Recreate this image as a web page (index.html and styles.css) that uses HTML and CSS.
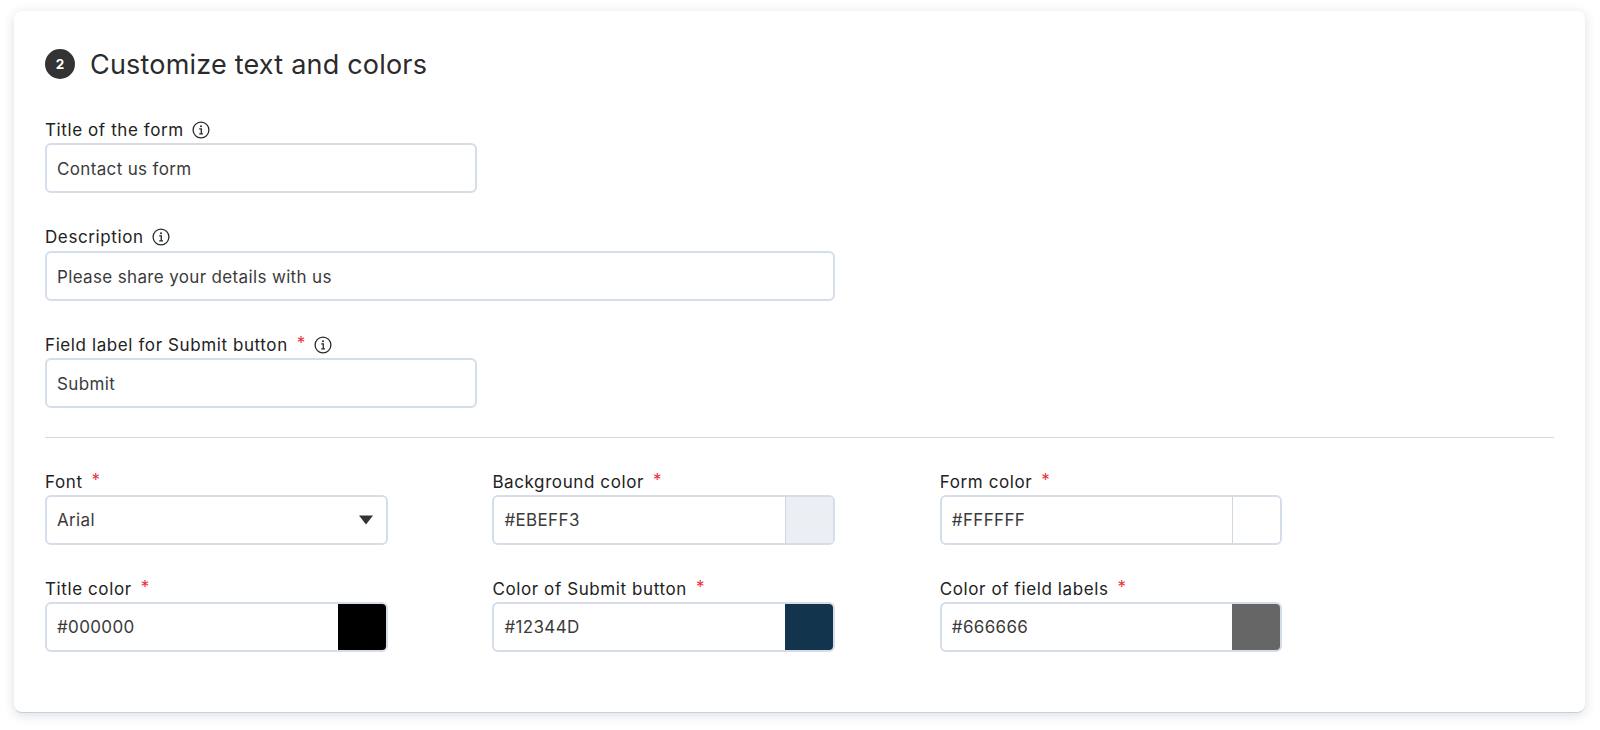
FILE: index.html
```html
<!DOCTYPE html>
<html lang="en">
<head>
    <meta charset="UTF-8">
    <meta name="viewport" content="width=device-width, initial-scale=1.0">
    <title>Customize text and colors</title>
    <link rel="stylesheet" href="styles.css">
</head>
<body>
    <div class="card">
        <div class="card-header">
            <span class="step">2</span>
            <h2>Customize text and colors</h2>
        </div>

        <div class="fields">
            <div class="field field-short">
                <label>Title of the form<svg class="info" viewBox="0 0 18 18"><circle cx="9" cy="9" r="7.9"/><path d="M7.2 7.9H9.3V12.8M7.2 12.9H11"/><circle class="dot" cx="9" cy="5.3" r="1"/></svg></label>
                <div class="input">Contact us form</div>
            </div>

            <div class="field field-long">
                <label>Description<svg class="info" viewBox="0 0 18 18"><circle cx="9" cy="9" r="7.9"/><path d="M7.2 7.9H9.3V12.8M7.2 12.9H11"/><circle class="dot" cx="9" cy="5.3" r="1"/></svg></label>
                <div class="input">Please share your details with us</div>
            </div>

            <div class="field field-short">
                <label>Field label for Submit button<span class="req">*</span><svg class="info" viewBox="0 0 18 18"><circle cx="9" cy="9" r="7.9"/><path d="M7.2 7.9H9.3V12.8M7.2 12.9H11"/><circle class="dot" cx="9" cy="5.3" r="1"/></svg></label>
                <div class="input">Submit</div>
            </div>
        </div>

        <hr class="divider">

        <div class="color-grid">
            <div class="field">
                <label>Font<span class="req">*</span></label>
                <div class="input select">Arial
                    <svg class="caret" viewBox="0 0 14 10"><path d="M0 0.5H14L7 9.5Z"/></svg>
                </div>
            </div>
            <div class="field">
                <label>Background color<span class="req">*</span></label>
                <div class="input color">#EBEFF3<span class="swatch swatch-bg"></span></div>
            </div>
            <div class="field">
                <label>Form color<span class="req">*</span></label>
                <div class="input color">#FFFFFF<span class="swatch swatch-form"></span></div>
            </div>
            <div class="field">
                <label>Title color<span class="req">*</span></label>
                <div class="input color">#000000<span class="swatch swatch-title"></span></div>
            </div>
            <div class="field">
                <label>Color of Submit button<span class="req">*</span></label>
                <div class="input color">#12344D<span class="swatch swatch-submit"></span></div>
            </div>
            <div class="field">
                <label>Color of field labels<span class="req">*</span></label>
                <div class="input color">#666666<span class="swatch swatch-labels"></span></div>
            </div>
        </div>
    </div>
</body>
</html>
```

FILE: styles.css
```css
body {
    margin: 0;
    height: 730px;
    overflow: hidden;
    padding: 11px 15px 0 14px;
    box-sizing: border-box;
    background-color: #fff;
    font-family: Inter, "Liberation Sans", sans-serif;
    color: #2a2a2a;
}
.card {
    height: 702px;
    box-sizing: border-box;
    padding: 38px 31px 0 31px;
    background-color: #fff;
    border-radius: 8px;
    border-bottom: 1px solid #c6cfda;
    box-shadow: 0 2px 12px rgba(18, 52, 77, 0.16);
}
.card-header {
    display: flex;
    align-items: center;
    gap: 15px;
    height: 30px;
    margin-bottom: 40px;
}
.card-header h2 {
    margin: 0;
    font-size: 27px;
    font-weight: 400;
    letter-spacing: 0.2px;
    color: #2b2b2b;
}
.step {
    width: 30px;
    height: 30px;
    border-radius: 50%;
    display: flex;
    align-items: center;
    justify-content: center;
    background-color: #333;
    color: #fff;
    font-size: 13.5px;
    font-weight: 700;
}
.fields {
    display: flex;
    flex-direction: column;
    gap: 33.5px;
}
.fields .input {
    padding-top: 2px;
}
.field-short {
    width: 432px;
}
.field-long {
    width: 790px;
}
label {
    display: flex;
    align-items: center;
    height: 21px;
    margin-bottom: 3px;
    font-size: 17px;
    line-height: 20px;
    letter-spacing: 0.6px;
    color: #222;
}
.req {
    margin-left: 9px;
    margin-top: -3px;
    color: #e8303a;
    font-size: 17px;
}
.info {
    width: 18px;
    height: 18px;
    margin-left: 8px;
    fill: none;
    stroke: #2a2a2a;
    stroke-width: 1.3;
}
.info .dot {
    fill: #2a2a2a;
    stroke: none;
}
.input {
    height: 50px;
    box-sizing: border-box;
    display: flex;
    align-items: center;
    justify-content: space-between;
    padding-left: 10px;
    border: 2px solid #d5dde8;
    border-radius: 6px;
    background-color: #fff;
    font-size: 17px;
    letter-spacing: 0.35px;
    color: #3b3b3b;
    overflow: hidden;
}
.select {
    padding-right: 13px;
}
.caret {
    width: 14px;
    height: 10px;
    fill: #333;
}
.color {
    padding-right: 0;
}
.swatch {
    width: 48px;
    height: 100%;
    box-sizing: border-box;
}
.swatch-bg {
    background-color: #ebeff3;
    border-left: 1px solid #cfd7e3;
}
.swatch-form {
    background-color: #fff;
    border-left: 1px solid #cfd7e3;
}
.swatch-title {
    background-color: #000;
}
.swatch-submit {
    background-color: #12344d;
}
.swatch-labels {
    background-color: #666;
}
.divider {
    height: 1px;
    margin: 29px 0 33px;
    border: none;
    background-color: #cfdae3;
}
.color-grid {
    display: grid;
    grid-template-columns: 343px 343px 342.6px;
    column-gap: 104.4px;
    row-gap: 33px;
}
```
